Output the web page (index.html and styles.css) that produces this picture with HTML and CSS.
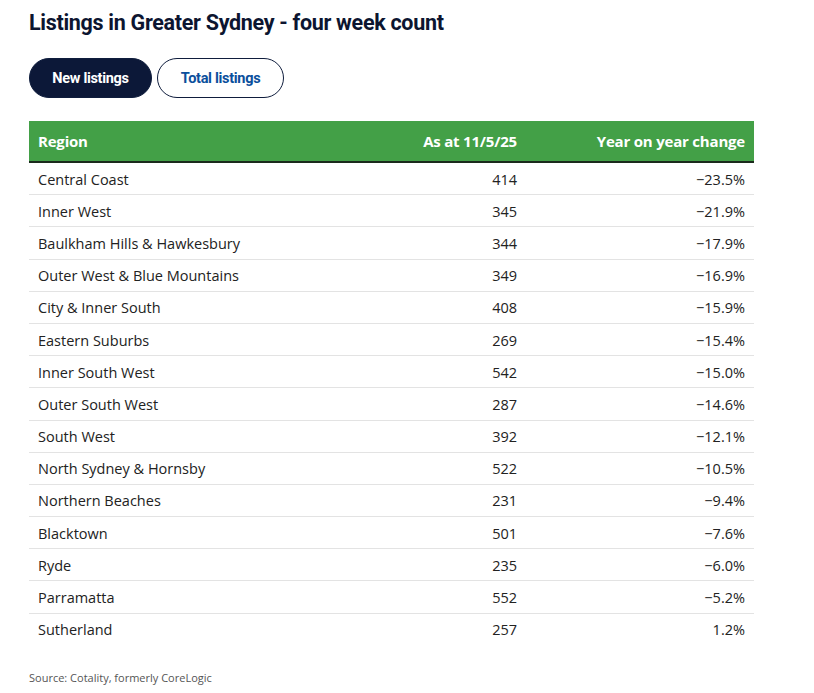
FILE: index.html
```html
<!DOCTYPE html>
<html lang="en">
<head>
<meta charset="utf-8">
<link rel="stylesheet" href="styles.css">
</head>
<body>
<div class="wrap">
  <h1 class="title">Listings in Greater Sydney - four week count</h1>
  <div class="tabs">
    <button class="tab tab-active">New listings</button>
    <button class="tab">Total listings</button>
  </div>
  <table class="data">
    <thead>
      <tr><th class="c1">Region</th><th class="c2">As at 11/5/25</th><th class="c3">Year on year change</th></tr>
    </thead>
    <tbody>
      <tr><td>Central Coast</td><td class="num">414</td><td class="num">−23.5%</td></tr>
      <tr><td>Inner West</td><td class="num">345</td><td class="num">−21.9%</td></tr>
      <tr><td>Baulkham Hills &amp; Hawkesbury</td><td class="num">344</td><td class="num">−17.9%</td></tr>
      <tr><td>Outer West &amp; Blue Mountains</td><td class="num">349</td><td class="num">−16.9%</td></tr>
      <tr><td>City &amp; Inner South</td><td class="num">408</td><td class="num">−15.9%</td></tr>
      <tr><td>Eastern Suburbs</td><td class="num">269</td><td class="num">−15.4%</td></tr>
      <tr><td>Inner South West</td><td class="num">542</td><td class="num">−15.0%</td></tr>
      <tr><td>Outer South West</td><td class="num">287</td><td class="num">−14.6%</td></tr>
      <tr><td>South West</td><td class="num">392</td><td class="num">−12.1%</td></tr>
      <tr><td>North Sydney &amp; Hornsby</td><td class="num">522</td><td class="num">−10.5%</td></tr>
      <tr><td>Northern Beaches</td><td class="num">231</td><td class="num">−9.4%</td></tr>
      <tr><td>Blacktown</td><td class="num">501</td><td class="num">−7.6%</td></tr>
      <tr><td>Ryde</td><td class="num">235</td><td class="num">−6.0%</td></tr>
      <tr><td>Parramatta</td><td class="num">552</td><td class="num">−5.2%</td></tr>
      <tr><td>Sutherland</td><td class="num">257</td><td class="num">1.2%</td></tr>
    </tbody>
  </table>
  <p class="source">Source: Cotality, formerly CoreLogic</p>
</div>
</body>
</html>
```
FILE: styles.css
```css
html, body { margin: 0; padding: 0; background: #fff; }
body { font-family: "Open Sans", "Noto Sans", sans-serif; color: #222; }
.wrap { padding: 10px 0 0 29px; width: 725px; }
.title {
  margin: 0;
  font-family: "Roboto", "Liberation Sans", sans-serif;
  font-weight: 700;
  font-size: 21.5px;
  line-height: 26px;
  color: #0c1530;
  letter-spacing: -0.3px;
}
.tabs { display: flex; gap: 5px; margin-top: 22px; }
.tab {
  height: 40px;
  border-radius: 20px;
  border: 1px solid #0f1d3d;
  background: #fff;
  color: #0b4f9c;
  font-family: "Roboto", "Liberation Sans", sans-serif;
  font-weight: 700;
  font-size: 14.5px;
  letter-spacing: -0.3px;
  padding: 0 10px;
  width: 127px;
}
.tab-active { background: #0c1838; color: #fff; width: 123px; }
.data {
  margin-top: 23px;
  width: 725px;
  border-collapse: collapse;
  font-size: 14.5px;
}
.data th {
  background: #43a047;
  color: #fff;
  font-weight: 700;
  font-size: 15px;
  letter-spacing: -0.2px;
  height: 40px;
  padding: 0 9px;
  border-bottom: 2px solid #1b2a1c;
  text-align: left;
}
.data th.c2, .data th.c3 { text-align: right; }
.data th.c2 { width: 180px; }
.data th.c3 { width: 210px; }
.data td {
  height: 30.2px;
  padding: 1px 9px 0;
  border-bottom: 1px solid #e3e3e3;
  color: #222;
}
.data tbody tr:last-child td { border-bottom: none; }
.data td.num { text-align: right; }
.source {
  margin: 25px 0 0;
  font-size: 11px;
  color: #555;
}
```
